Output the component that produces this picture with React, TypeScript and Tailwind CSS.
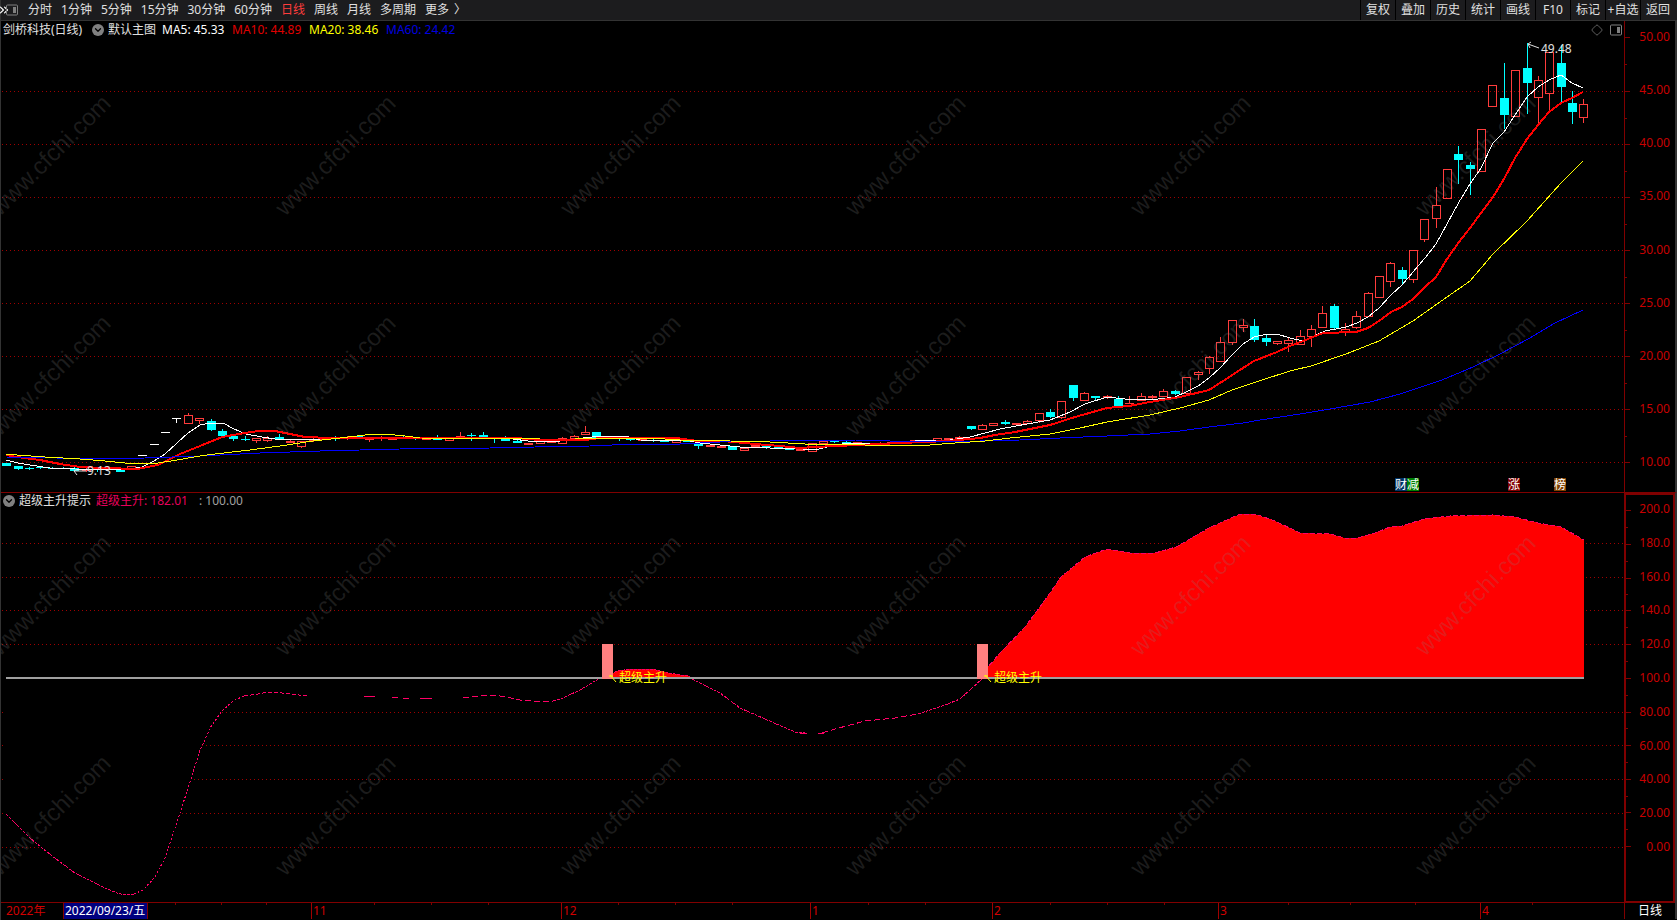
import { ChevronDown, ChevronsRight, Diamond, PanelRight } from "lucide-react";

type Kind = "up" | "down" | "flat";
// kind, body top, body bottom, high, low
type Candle = [Kind, number, number, number, number];
type Point = [number, number];

const FIRST_X = 6.3;
const STEP = 11.345;

const candles: Candle[] = [
  ["down", 463, 466, 463, 466],
  ["down", 466, 469, 466, 470],
  ["down", 468, 469, 467, 470],
  ["down", 467, 468, 466, 469],
  ["down", 468, 469, 467, 469],
  ["down", 468, 469, 467, 469],
  ["down", 468, 471, 467, 472],
  ["up", 469, 471, 468, 472],
  ["down", 469, 470, 468, 472],
  ["up", 469, 470, 468, 471],
  ["down", 470, 472, 470, 472],
  ["up", 466, 469, 466, 469],
  ["flat", 455, 456, 455, 456],
  ["flat", 444, 445, 444, 445],
  ["flat", 432, 433, 432, 433],
  ["flat", 418, 419, 418, 423],
  ["up", 415, 424, 413, 424],
  ["up", 418, 421, 418, 424],
  ["down", 421, 430, 419, 431],
  ["down", 431, 436, 429, 436],
  ["down", 436, 439, 434, 441],
  ["down", 439, 440, 436, 441],
  ["up", 438, 441, 438, 443],
  ["up", 438, 441, 436, 442],
  ["down", 437, 440, 434, 440],
  ["up", 441, 443, 439, 443],
  ["up", 441, 447, 441, 448],
  ["up", 439, 441, 438, 442],
  ["up", 438, 440, 437, 440],
  ["down", 437, 438, 436, 441],
  ["up", 437, 439, 436, 440],
  ["down", 436, 438, 436, 439],
  ["up", 438, 440, 437, 442],
  ["up", 437, 439, 436, 441],
  ["up", 438, 440, 437, 440],
  ["down", 437, 438, 435, 439],
  ["down", 438, 439, 437, 440],
  ["up", 438, 440, 438, 440],
  ["down", 438, 440, 435, 440],
  ["up", 438, 441, 438, 441],
  ["up", 436, 438, 432, 438],
  ["down", 435, 436, 433, 441],
  ["down", 435, 437, 432, 437],
  ["down", 438, 439, 438, 443],
  ["down", 438, 441, 436, 441],
  ["down", 441, 443, 440, 443],
  ["up", 443, 445, 443, 445],
  ["up", 441, 444, 441, 444],
  ["up", 441, 443, 440, 443],
  ["up", 438, 444, 437, 444],
  ["up", 436, 439, 435, 439],
  ["up", 432, 435, 426, 435],
  ["down", 432, 438, 432, 438],
  ["down", 437, 439, 437, 439],
  ["down", 437, 438, 437, 441],
  ["down", 438, 440, 438, 441],
  ["up", 439, 441, 439, 441],
  ["down", 440, 441, 439, 442],
  ["down", 440, 442, 440, 442],
  ["up", 440, 443, 440, 443],
  ["down", 440, 442, 440, 442],
  ["down", 443, 446, 443, 449],
  ["up", 445, 447, 445, 447],
  ["up", 446, 448, 445, 448],
  ["down", 446, 450, 446, 450],
  ["up", 448, 451, 448, 451],
  ["up", 445, 447, 444, 447],
  ["down", 445, 447, 445, 449],
  ["down", 447, 448, 446, 448],
  ["down", 448, 450, 448, 450],
  ["up", 449, 451, 449, 451],
  ["up", 443, 452, 443, 452],
  ["up", 441, 444, 441, 444],
  ["down", 441, 442, 440, 443],
  ["down", 442, 443, 440, 443],
  ["up", 442, 444, 442, 444],
  ["down", 443, 444, 443, 444],
  ["up", 443, 444, 442, 444],
  ["up", 442, 444, 442, 444],
  ["up", 441, 443, 441, 443],
  ["up", 440, 442, 440, 442],
  ["up", 440, 442, 440, 442],
  ["up", 438, 441, 438, 441],
  ["up", 438, 440, 438, 440],
  ["up", 437, 439, 436, 439],
  ["down", 426, 429, 426, 430],
  ["up", 425, 430, 424, 430],
  ["up", 423, 426, 423, 426],
  ["down", 422, 424, 420, 425],
  ["up", 423, 425, 423, 425],
  ["up", 421, 424, 420, 424],
  ["up", 413, 421, 413, 423],
  ["down", 412, 417, 409, 418],
  ["up", 401, 418, 401, 419],
  ["down", 385, 398, 385, 401],
  ["up", 393, 401, 392, 401],
  ["down", 396, 398, 396, 400],
  ["up", 396, 398, 395, 399],
  ["down", 399, 406, 396, 406],
  ["up", 403, 404, 396, 404],
  ["up", 396, 401, 393, 401],
  ["up", 396, 398, 395, 400],
  ["up", 391, 397, 389, 397],
  ["down", 391, 394, 390, 395],
  ["up", 377, 394, 377, 394],
  ["up", 372, 375, 371, 380],
  ["up", 357, 369, 356, 374],
  ["up", 342, 362, 337, 362],
  ["up", 320, 343, 320, 345],
  ["up", 325, 328, 319, 332],
  ["down", 326, 340, 319, 342],
  ["down", 338, 342, 335, 346],
  ["up", 341, 344, 341, 345],
  ["up", 340, 344, 338, 352],
  ["up", 336, 345, 330, 345],
  ["up", 329, 337, 325, 347],
  ["up", 313, 328, 306, 328],
  ["down", 306, 328, 304, 330],
  ["up", 329, 332, 323, 336],
  ["up", 316, 328, 311, 329],
  ["up", 293, 317, 292, 317],
  ["up", 276, 298, 276, 298],
  ["up", 263, 282, 262, 287],
  ["down", 270, 279, 267, 284],
  ["up", 250, 280, 250, 283],
  ["up", 219, 240, 219, 242],
  ["up", 205, 219, 187, 228],
  ["up", 169, 199, 169, 199],
  ["down", 154, 160, 146, 184],
  ["down", 165, 169, 162, 195],
  ["up", 129, 172, 129, 172],
  ["up", 85, 107, 85, 107],
  ["down", 98, 115, 63, 129],
  ["up", 70, 117, 70, 117],
  ["down", 68, 83, 43, 114],
  ["up", 80, 98, 76, 124],
  ["up", 52, 94, 52, 110],
  ["down", 63, 87, 45, 102],
  ["down", 103, 112, 91, 124],
  ["up", 104, 118, 99, 123],
];

const ma5 =
  "6,460 18,463 30,465 50,468 75,469 115,470 131,469 142,467 154,461 165,454 177,443 188,433 200,425 211,423 223,423 234,429 246,434 262,437 275,439 320,439 340,438 420,438 513,439 528,441 560,441 575,439 592,437 602,436 625,436 640,440 690,441 700,443 730,446 740,447 770,448 790,448 815,450 835,445 850,443 890,443 915,441 950,440 970,437 1000,429 1027,424 1050,420 1070,412 1085,404 1107,397 1125,399 1150,400 1175,397 1186,392 1198,386 1209,378 1220,368 1232,355 1243,344 1254,337 1267,334 1277,334 1290,338 1303,341 1325,331 1336,329 1346,327 1357,323 1368,317 1379,308 1391,295 1402,285 1413,272 1425,258 1436,244 1447,224 1459,202 1470,184 1481,168 1493,143 1504,132 1515,115 1527,97 1538,87 1549,80 1561,75 1572,83 1583,88";
const ma10 =
  "6,455 17,457 40,460 60,464 80,467 105,468 137,469 158,465 180,454 200,446 222,437 245,433 258,431 275,431 290,434 305,437 330,438 516,438 540,440 585,440 600,438 676,438 698,441 722,441 755,444 780,446 800,448 815,447 835,446 860,445 900,443 948,441 980,438 995,435 1015,432 1050,425 1075,417 1107,408 1129,406 1150,402 1180,397 1209,390 1220,383 1243,368 1254,361 1277,352 1290,346 1303,341 1323,333 1356,332 1368,328 1379,321 1391,312 1402,307 1413,299 1425,287 1436,277 1447,259 1459,242 1470,228 1481,213 1493,197 1504,179 1515,158 1527,139 1538,125 1549,112 1561,103 1572,98 1583,92";
const ma20 =
  "6,454 17,455 45,457 80,459 105,461 125,463 158,463 177,460 200,456 215,454 250,450 280,446 313,441 340,438 365,435 385,434 405,436 420,438 540,439 575,439 585,438 650,438 680,440 730,441 770,442 805,444 840,444 865,445 930,445 955,443 985,441 1010,438 1050,434 1080,428 1107,422 1150,415 1180,408 1209,400 1232,390 1262,380 1290,371 1311,366 1346,354 1379,341 1413,321 1447,297 1470,281 1493,254 1527,221 1561,183 1583,161";
const ma60 =
  "6,457 57,458 90,459 145,458 200,456 260,453 320,451 400,449 490,448 535,447 590,446 635,444 680,444 720,442 770,441 790,440 855,440 890,441 980,441 1020,440 1060,438 1107,436 1150,434 1180,431 1209,427 1243,423 1260,420 1300,414 1330,409 1370,402 1400,394 1442,380 1473,367 1500,354 1530,338 1555,323 1583,310";

const BASE_Y = 678;

const trend: Point[] = [
  [6, 814], [22, 830], [30, 838], [52, 856], [75, 873], [105, 888], [117, 893], [125, 895], [134, 894],
  [143, 890], [155, 877], [165, 858], [171, 840], [180, 813], [190, 782], [195, 766], [200, 750],
  [204, 742], [210, 728], [222, 711], [233, 701], [244, 696], [258, 694], [268, 692], [282, 693],
  [307, 696], [374, 696], [392, 697], [432, 698], [463, 698], [480, 696], [494, 695], [506, 697],
  [520, 700], [533, 701], [553, 701], [563, 698], [580, 690], [600, 678], [610, 674], [618, 671],
  [630, 669], [652, 669], [668, 673], [688, 676], [694, 680], [720, 693], [740, 708], [765, 719],
  [795, 732], [805, 733], [822, 733], [835, 729], [865, 721], [895, 718], [918, 714], [945, 705],
  [960, 699], [983, 678], [988, 667], [1000, 653], [1025, 627], [1045, 600], [1061, 577], [1085, 557],
  [1107, 549], [1130, 553], [1155, 553], [1176, 547], [1209, 528], [1240, 514], [1255, 514],
  [1275, 521], [1300, 533], [1330, 534], [1345, 538], [1357, 538], [1375, 533], [1390, 527],
  [1402, 526], [1424, 519], [1450, 516], [1493, 515], [1515, 517], [1538, 523], [1561, 527], [1584, 540],
];

const toPath = (points: Point[]) => points.map((p) => p.join(",")).join(" ");

// close the curve against the 100 line
const area = (keep: (y: number) => number) =>
  `6,${BASE_Y} ${toPath(trend.map(([x, y]) => [x, keep(y)]))} 1584,${BASE_Y}`;

const trendParts = [
  { from: 6, to: 134, dash: "3 1" },
  { from: 134, to: 244, dash: "2 2" },
  { from: 244, to: 307, dash: "4 2" },
  { from: 463, to: 553, dash: "6 3" },
  { from: 553, to: 805, dash: "3 1" },
  { from: 822, to: 918, dash: "6 3" },
  { from: 918, to: 983, dash: "3 1" },
  { from: 983, to: 1584, dash: "5 2" },
];

const watermarkX = [0, 285, 570, 855, 1140, 1425];
const priceGrid = [91, 144, 197, 250, 303, 356, 409, 462];
const trendGrid = [543, 577, 610, 644, 712, 745, 779, 813, 847];

const prices = ["50.00", "45.00", "40.00", "35.00", "30.00", "25.00", "20.00", "15.00", "10.00"];
const levels = ["200.0", "180.0", "160.0", "140.0", "120.0", "100.0", "80.00", "60.00", "40.00", "20.00", "0.00"];

const periods = ["分时", "1分钟", "5分钟", "15分钟", "30分钟", "60分钟", "日线", "周线", "月线", "多周期", "更多"];
const actions = ["复权", "叠加", "历史", "统计", "画线", "F10", "标记", "+自选", "返回"];
const months = ["11", "12", "1", "2", "3", "4"];
const weekTicks = [175, 221, 266, 374, 431, 488, 618, 675, 732, 868, 925, 1050, 1107, 1164, 1288, 1350, 1415, 1532];

const tags = [
  { x: 1395, label: "财", fill: "#003366" },
  { x: 1407, label: "减", fill: "#008000" },
  { x: 1508, label: "涨", fill: "#800000" },
  { x: 1554, label: "榜", fill: "#804000" },
];

function Watermarks({ rows }: { rows: number[] }) {
  return (
    <g fill="#808080" fillOpacity={0.22} fontFamily="Liberation Sans, Arial, sans-serif" fontSize={24}>
      {rows.map((y) =>
        watermarkX.map((x) => (
          <text key={`${x}-${y}`} transform={`translate(${x} ${y}) rotate(-45)`}>
            www.cfchi.com
          </text>
        ))
      )}
    </g>
  );
}

function Grid({ rows }: { rows: number[] }) {
  return (
    <g stroke="#a00000" strokeDasharray="1 3" shapeRendering="crispEdges">
      {rows.map((y) => (
        <line key={y} x1={2} x2={1624} y1={y + 0.5} y2={y + 0.5} />
      ))}
    </g>
  );
}

function CandleMark({ candle, index }: { candle: Candle; index: number }) {
  const [kind, top, bottom, high, low] = candle;
  const x = Math.round(FIRST_X + index * STEP);
  const color = kind === "up" ? "#ff3c3c" : kind === "down" ? "#00ffff" : "#ffffff";
  return (
    <g fill={color}>
      {high < top && <rect x={x} y={high} width={1} height={top - high} />}
      {low > bottom && <rect x={x} y={bottom} width={1} height={low - bottom} />}
      {kind === "up" && bottom - top > 2 ? (
        <rect x={x - 3.5} y={top + 0.5} width={8} height={bottom - top - 1} fill="none" stroke={color} />
      ) : (
        <rect x={x - 4} y={top} width={9} height={bottom - top} />
      )}
    </g>
  );
}

function PriceChart() {
  return (
    <svg viewBox="1 41 1623 451" className="block w-full" role="img" aria-label="剑桥科技日线">
      <Grid rows={priceGrid} />
      <g shapeRendering="crispEdges">
        {candles.map((candle, i) => (
          <CandleMark key={i} candle={candle} index={i} />
        ))}
        <g fill="none" strokeWidth={1}>
          <polyline points={ma5} stroke="#ffffff" />
          <polyline points={ma10} stroke="#ff0000" strokeWidth={2} />
          <polyline points={ma60} stroke="#0000ff" />
          <polyline points={ma20} stroke="#ffff00" />
        </g>
      </g>
      <g fill="none" stroke="#e0e0e0">
        <path d="M1528 44l11 4M1528 44l3-2M1528 44l2 4" />
        <path d="M74 471h12M74 471l3-2M74 471l3 4" />
      </g>
      <g fill="#e0e0e0" fontSize={12}>
        <text x={1541} y={53}>49.48</text>
        <text x={87} y={475}>9.13</text>
      </g>
      {tags.map((tag) => (
        <g key={tag.label}>
          <rect x={tag.x} y={478} width={12} height={13} fill={tag.fill} />
          <text x={tag.x} y={489} fill="#ffffff" fontSize={12}>
            {tag.label}
          </text>
        </g>
      ))}
      <Watermarks rows={[217, 437]} />
    </svg>
  );
}

function TrendChart() {
  return (
    <svg viewBox="1 511 1623 391" className="block w-full" role="img" aria-label="超级主升提示">
      <Grid rows={trendGrid} />
      <g shapeRendering="crispEdges">
        <polygon points={area((y) => Math.max(y, BASE_Y))} fill="#000000" />
        <polygon points={area((y) => Math.min(y, BASE_Y))} fill="#ff0000" />
        <g fill="none" stroke="#ff0066">
          {trendParts.map((part) => (
            <polyline
              key={part.from}
              points={toPath(trend.filter(([x]) => x >= part.from && x <= part.to))}
              strokeDasharray={part.dash}
            />
          ))}
          <path d="M364 696.5h11M392 697.5h6M403 698.5h6M420 698.5h12M800 733.5h7M818 733.5h6" />
        </g>
        <rect x={6} y={677} width={1578} height={2} fill="#a0a0a0" />
        <rect x={602} y={644} width={11} height={35} fill="#ff8080" />
        <rect x={977} y={644} width={11} height={35} fill="#ff8080" />
      </g>
      {[609, 984].map((x) => (
        <g key={x}>
          <path d={`M${x} 676h4M${x + 1} 675l6 7`} stroke="#ffff00" fill="none" />
          <text x={x + 10} y={682} fill="#ffff00" fontSize={12}>
            超级主升
          </text>
        </g>
      ))}
      <Watermarks rows={[657, 877]} />
    </svg>
  );
}

function AxisTicks({ viewBox, major, minor }: { viewBox: string; major: number[]; minor: number[] }) {
  return (
    <svg
      viewBox={viewBox}
      preserveAspectRatio="none"
      className="absolute left-0 top-0 h-full w-[6px]"
      fill="#800000"
      shapeRendering="crispEdges"
      aria-hidden="true"
    >
      {major.map((y) => (
        <rect key={y} x={0} y={y} width={5} height={1} />
      ))}
      {minor.map((y) => (
        <rect key={y} x={0} y={y} width={2} height={1} />
      ))}
    </svg>
  );
}

function Dropdown({ label }: { label: string }) {
  return (
    <button aria-label={label} className="flex size-3 items-center justify-center rounded-full bg-[#808080]">
      <ChevronDown className="size-[10px] text-black" strokeWidth={3} />
    </button>
  );
}

export default function App() {
  return (
    <div className="flex min-h-screen flex-col border-l border-[#333333] bg-black font-['Noto_Sans','Noto_Sans_CJK_SC',sans-serif] text-xs leading-4 text-[#e0e0e0]">
      <nav className="flex h-[21px] items-center justify-between border-b border-[#333333] bg-[#1c1c1e]">
        <div className="flex items-center gap-[9px] whitespace-nowrap">
          <button aria-label="侧栏" className="flex w-[18px] items-center text-[#808080]">
            <ChevronsRight className="-ml-1 size-[14px] shrink-0 text-white" />
            <svg viewBox="0 0 12 12" className="-ml-[5px] size-3 shrink-0" fill="none" stroke="currentColor">
              <rect x="0.5" y="1" width="11" height="10" rx="1" />
              <rect x="7" y="3" width="3" height="6" fill="currentColor" stroke="none" />
            </svg>
          </button>
          {periods.map((period) => (
            <button key={period} className={period === "日线" ? "text-[#ff3c3c]" : ""}>
              {period}
            </button>
          ))}
          <span className="-ml-1">〉</span>
        </div>
        <div className="mr-[2px] flex whitespace-nowrap">
          {actions.map((action) => (
            <button key={action} className="h-5 w-[35px] border-l border-black text-center">
              {action}
            </button>
          ))}
        </div>
      </nav>

      <section className="flex border-b border-r-2 border-b-[#800000] border-r-[#333333]">
        <div className="min-w-0 flex-1">
          <header className="flex h-5 items-center justify-between pb-[2px] pr-[2px]">
            <div className="flex items-center whitespace-nowrap pl-[2px]">
              <h1 className="w-[89px]">剑桥科技(日线)</h1>
              <Dropdown label="选择主图" />
              <span className="ml-1 w-[54px]">默认主图</span>
              <span className="w-[70px] text-white">MA5: 45.33</span>
              <span className="w-[77px] text-[#e00000]">MA10: 44.89</span>
              <span className="w-[77px] text-[#ffff00]">MA20: 38.46</span>
              <span className="text-[#0000e0]">MA60: 24.42</span>
            </div>
            <div className="flex items-center gap-[7px] text-[#808080]">
              <Diamond className="size-3" strokeWidth={1.5} />
              <svg viewBox="0 0 12 12" className="size-3" fill="none" stroke="currentColor">
                <rect x="0.5" y="1" width="11" height="10" rx="1" />
                <rect x="7" y="3" width="3" height="6" fill="currentColor" stroke="none" />
              </svg>
            </div>
          </header>
          <PriceChart />
        </div>
        <div className="relative flex w-[51px] flex-col justify-between border-l border-[#800000] pb-[22px] pr-[5px] pt-2 text-right text-[#c80000]">
          <AxisTicks
            viewBox="0 21 6 471"
            major={[37, ...priceGrid]}
            minor={[64, 118, 171, 224, 277, 330, 383, 436]}
          />
          {prices.map((price) => (
            <span key={price}>{price}</span>
          ))}
        </div>
      </section>

      <section className="flex border-r-2 border-[#333333]">
        <div className="min-w-0 flex-1 border-b border-[#800000]">
          <header className="flex h-[18px] items-center whitespace-nowrap pb-[2px] pl-[2px]">
            <Dropdown label="选择指标" />
            <h2 className="ml-1 w-[77px]">超级主升提示</h2>
            <span className="w-[103px] text-[#e6005c]">超级主升: 182.01</span>
            <span className="text-[#a0a0a0]">: 100.00</span>
          </header>
          <TrendChart />
        </div>
        <div className="relative flex w-[51px] flex-col justify-between border-2 border-[#800000] pb-[46px] pr-[3px] pt-[6px] text-right text-[#c80000]">
          <AxisTicks
            viewBox="0 494 6 408"
            major={[509, 543, 577, 610, 644, 678, 712, 745, 779, 813, 847]}
            minor={[526, 560, 593, 627, 661, 695, 728, 762, 796, 830]}
          />
          {levels.map((level) => (
            <span key={level}>{level}</span>
          ))}
        </div>
      </section>

      <footer className="flex h-4 border-r-2 border-[#333333] text-[#d00000]">
        <div className="relative grid min-w-0 flex-1 grid-cols-[62fr_85fr_163fr_250fr_249fr_182fr_226fr_262fr_144fr]">
          <svg
            viewBox="1 0 1623 16"
            preserveAspectRatio="none"
            className="absolute inset-0 size-full"
            fill="#800000"
            aria-hidden="true"
          >
            {weekTicks.map((x) => (
              <rect key={x} x={x} y={0} width={1} height={2} />
            ))}
          </svg>
          <span className="pl-[5px]">2022年</span>
          <time dateTime="2022-09-23" className="whitespace-nowrap border-x border-[#800000] bg-[#000080] pl-px text-white">
            2022/09/23/五
          </time>
          <span />
          {months.map((month) => (
            <span key={month} className="border-l border-[#a00000] pl-px">
              {month}
            </span>
          ))}
        </div>
        <button className="w-[51px] border-l border-[#800000] text-white">日线</button>
      </footer>
    </div>
  );
}
